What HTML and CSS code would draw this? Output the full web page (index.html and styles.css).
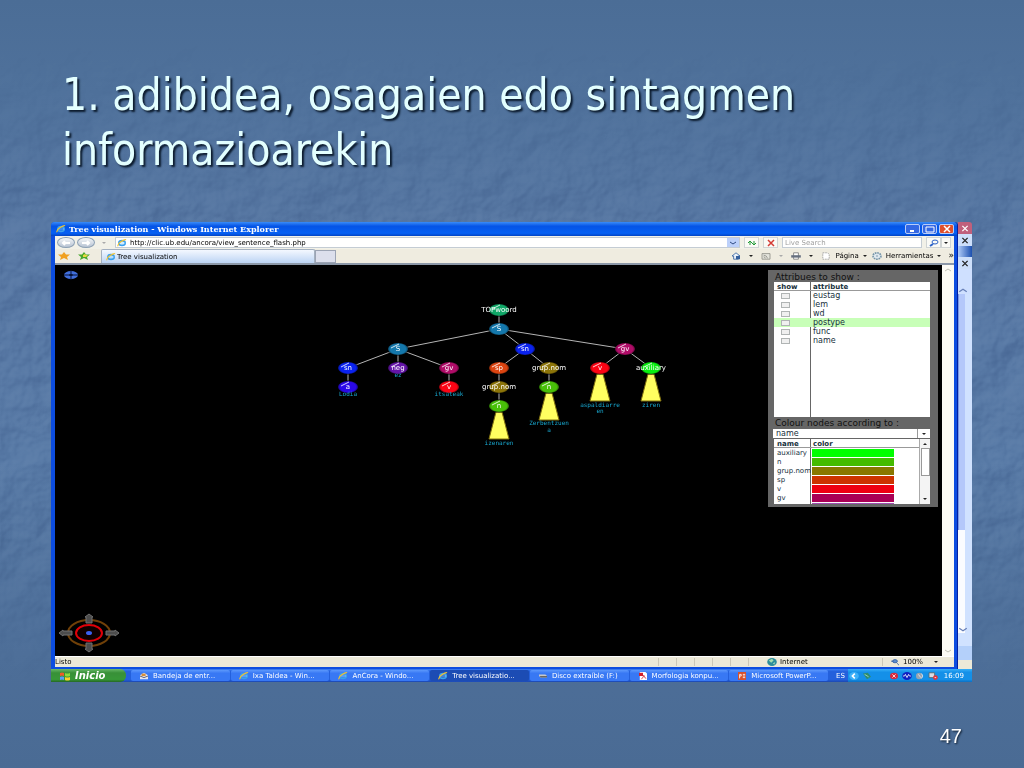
FILE: index.html
```html
<!DOCTYPE html>
<html lang="eu">
<head>
    <meta charset="utf-8">
    <title>1. adibidea</title>
    <link rel="stylesheet" href="styles.css">
</head>
<body>

<!-- shared icons -->
<svg class="defs" width="0" height="0" aria-hidden="true">
    <symbol id="ie" viewBox="0 0 12 10">
        <ellipse cx="6" cy="5" rx="4" ry="3" fill="none" stroke="#3aa0ee" stroke-width="2"/>
        <path d="M3 5h7" stroke="#8fd0ff" stroke-width="1"/>
        <path d="M1 9Q0 6 5 3T11 1" fill="none" stroke="#f2c331" stroke-width="1.5"/>
    </symbol>
    <symbol id="cross" viewBox="0 0 10 8"><path d="M2 1l6 6M8 1L2 7" stroke="currentColor" stroke-width="1.5"/></symbol>
    <symbol id="down" viewBox="0 0 6 4"><path d="M1 1h4L3 3z" fill="currentColor"/></symbol>
    <symbol id="up" viewBox="0 0 6 4"><path d="M1 3h4L3 1z" fill="currentColor"/></symbol>
    <symbol id="chevron" viewBox="0 0 8 4"><path d="M1 1l3 2 3-2" fill="none" stroke="currentColor"/></symbol>
    <symbol id="chevron-up" viewBox="0 0 8 4"><path d="M1 3l3-2 3 2" fill="none" stroke="currentColor"/></symbol>
    <symbol id="star" viewBox="0 0 12 8"><path d="M6 0l2 2.5h4L9 5l1 3-4-2-4 2 1-3-3-2.5h4z" fill="currentColor"/></symbol>
    <symbol id="star-add" viewBox="0 0 12 8"><path d="M6 0l2 2.5h4L9 5l1 3-4-2-4 2 1-3-3-2.5h4z" fill="#48a82c"/><path d="M7 2l1 1h2L8 5H5V3z" fill="#e8d840"/></symbol>
</svg>

<svg class="texture" aria-hidden="true">
    <filter id="paper" x="0" y="0" width="100%" height="100%" color-interpolation-filters="sRGB">
        <feTurbulence type="fractalNoise" baseFrequency="0.025 0.025" numOctaves="4" seed="8"/>
        <feColorMatrix values="0 0 0 0 1  0 0 0 0 1  0 0 0 0 1  1 0 0 0 0"/>
        <feDiffuseLighting surfaceScale="9" diffuseConstant="0.7" lighting-color="#ffffff"><feDistantLight azimuth="225" elevation="45"/></feDiffuseLighting>
    </filter>
    <rect width="100%" height="100%" filter="url(#paper)"/>
</svg>

<main class="slide">
    <h1>1. adibidea, osagaien edo sintagmen informazioarekin</h1>

    <section class="desktop">
        <div class="windows">
            <div class="browser">
                <header class="titlebar">
                    <svg class="icon"><use href="#ie"/></svg>
                    <span class="window-title">Tree visualization - Windows Internet Explorer</span>
                    <button class="win-btn" aria-label="Minimizar"><svg viewBox="0 0 12 8"><path d="M3 6h4" stroke="#fff" stroke-width="2"/></svg></button>
                    <button class="win-btn" aria-label="Restaurar"><svg viewBox="0 0 12 8"><path d="M2 2h8v5H2z" fill="none" stroke="#fff"/></svg></button>
                    <button class="win-btn close" aria-label="Cerrar"><svg><use href="#cross"/></svg></button>
                </header>

                <div class="address-row">
                    <button class="nav-btn" aria-label="Atrás"><svg viewBox="0 0 12 8"><path d="M10 4H3M5 2L3 4l2 2" fill="none" stroke="#fff" stroke-width="2"/></svg></button>
                    <button class="nav-btn" aria-label="Adelante"><svg viewBox="0 0 12 8"><path d="M2 4h7M7 2l2 2-2 2" fill="none" stroke="#fff" stroke-width="2"/></svg></button>
                    <svg class="caret gray"><use href="#down"/></svg>
                    <div class="url-box">
                        <svg class="icon"><use href="#ie"/></svg>
                        <input type="text" aria-label="Dirección" value="http://clic.ub.edu/ancora/view_sentence_flash.php">
                        <button class="drop" aria-label="Historial"><svg class="chevron"><use href="#chevron"/></svg></button>
                    </div>
                    <button class="tool-btn green" aria-label="Actualizar"><svg viewBox="0 0 12 8"><path d="M4 6V2M2 4l2-2 2 2M8 2v4M6 4l2 2 2-2" fill="none" stroke="currentColor"/></svg></button>
                    <button class="tool-btn red" aria-label="Detener"><svg><use href="#cross"/></svg></button>
                    <input class="search" type="text" aria-label="Buscar" placeholder="Live Search">
                    <button class="tool-btn blue" aria-label="Buscar"><svg viewBox="0 0 12 8"><ellipse cx="7" cy="3" rx="3" ry="2" fill="none" stroke="currentColor"/><path d="M5 5L2 7" stroke="currentColor" stroke-width="2"/></svg></button>
                    <button class="tool-btn thin" aria-label="Opciones"><svg class="caret"><use href="#down"/></svg></button>
                </div>

                <div class="tab-row">
                    <svg class="icon gold"><use href="#star"/></svg>
                    <svg class="icon leaf"><use href="#star-add"/></svg>
                    <button class="tab"><svg class="icon"><use href="#ie"/></svg>Tree visualization</button>
                    <button class="new-tab" aria-label="Nueva pestaña"></button>
                    <div class="commands">
                        <svg class="icon" viewBox="0 0 12 10"><path d="M1 5l5-4 5 4H9v4H3V5z" fill="#e8f0fa" stroke="#345f9c"/><path d="M6 5h5v4H6z" fill="#345f9c"/></svg>
                        <svg class="caret"><use href="#down"/></svg>
                        <svg class="icon" viewBox="0 0 12 10"><path d="M1 2h10v7H1z" fill="#e4e4dc" stroke="#8c8c84"/><path d="M3 4q4 0 5 4M3 6q2 0 2 2" fill="none" stroke="#8c8c84"/></svg>
                        <svg class="caret gray"><use href="#down"/></svg>
                        <svg class="icon" viewBox="0 0 12 10"><path d="M3 1h6v8H3z" fill="#fff" stroke="#777"/><path d="M0 4h12v3H0z" fill="#667080"/></svg>
                        <svg class="caret"><use href="#down"/></svg>
                        <button class="command"><svg class="icon" viewBox="0 0 12 10"><path d="M2 1h6l2 2v6H2z" fill="#fff" stroke="#999" stroke-dasharray="2 1"/></svg>Página<svg class="caret"><use href="#down"/></svg></button>
                        <button class="command"><svg class="icon" viewBox="0 0 12 10"><ellipse cx="6" cy="5" rx="5" ry="4" fill="#dfe8ee" stroke="#7695a8" stroke-width="2" stroke-dasharray="2 1"/><circle cx="6" cy="5" r="1" fill="#7695a8"/></svg>Herramientas<svg class="caret"><use href="#down"/></svg></button>
                        <span class="more">»</span>
                    </div>
                </div>

                <div class="viewport">
                    <div class="canvas">
                        <svg class="tree" viewBox="0 0 887 391">
                            <defs>
                                <radialGradient id="shade"><stop offset="0.7" stop-color="#000" stop-opacity="0"/><stop offset="1" stop-color="#000" stop-opacity="0.6"/></radialGradient>
                                <g id="gloss"><ellipse rx="11" ry="7" fill="url(#shade)"/><path d="M-7-1L1-5" stroke="#fff" stroke-opacity="0.8"/></g>
                                <path id="cone" d="M-3 6H3L10 33H-10z"/>
                                <path id="arrow" d="M0-19l4 3H3v6h-6v-6h-1z"/>
                            </defs>

                            <g class="edges">
                                <path d="M444 45V64L343 84M444 64L470 84M444 64L570 84"/>
                                <path d="M343 84L293 103V122M343 84V103M343 84L394 103V122"/>
                                <path d="M470 84L444 103V141M470 84L494 103V122"/>
                                <path d="M570 84L545 103M570 84L596 103"/>
                            </g>

                            <g class="cones">
                                <use href="#cone" x="444" y="141"/>
                                <use href="#cone" x="494" y="122"/>
                                <use href="#cone" x="545" y="103"/>
                                <use href="#cone" x="596" y="103"/>
                            </g>

                            <g class="nodes" id="nodes"></g>

                            <g class="words">
                                <text x="293" y="131">Lodia</text>
                                <text x="343" y="112">ez</text>
                                <text x="394" y="131">itsateak</text>
                                <text x="444" y="180">izenaren</text>
                                <text x="494" y="160">Zerbentzuen</text>
                                <text x="494" y="167">a</text>
                                <text x="545" y="142">aspaldiarre</text>
                                <text x="545" y="148">en</text>
                                <text x="596" y="142">ziren</text>
                            </g>

                            <g transform="translate(16 10)">
                                <ellipse rx="7" ry="4" fill="#416fdc"/>
                                <path d="M-7 0H7M0-5V5" stroke="#061238"/>
                                <ellipse rx="2" ry="1" fill="#061238"/>
                            </g>

                            <g transform="translate(34 368)">
                                <ellipse rx="21" ry="13" fill="none" stroke="#704008" stroke-width="2"/>
                                <ellipse rx="13" ry="8" fill="#100000" stroke="#e00008" stroke-width="2"/>
                                <ellipse rx="3" ry="2" fill="#3a60f0"/>
                                <g class="arrows">
                                    <use href="#arrow"/>
                                    <use href="#arrow" transform="rotate(180)"/>
                                    <path d="M-30 0l4-3v1h9v4h-9v1zM30 0l-4-3v1h-9v4h9v1z"/>
                                </g>
                            </g>
                        </svg>

                        <aside class="panel">
                            <h2>Attribues to show :</h2>
                            <div class="grid-box attributes">
                                <table>
                                    <thead><tr><th>show</th><th>attribute</th></tr></thead>
                                    <tbody>
                                        <tr><td><input type="checkbox" id="a1"></td><td><label for="a1">eustag</label></td></tr>
                                        <tr><td><input type="checkbox" id="a2"></td><td><label for="a2">lem</label></td></tr>
                                        <tr><td><input type="checkbox" id="a3"></td><td><label for="a3">wd</label></td></tr>
                                        <tr class="selected"><td><input type="checkbox" id="a4"></td><td><label for="a4">postype</label></td></tr>
                                        <tr><td><input type="checkbox" id="a5"></td><td><label for="a5">func</label></td></tr>
                                        <tr><td><input type="checkbox" id="a6"></td><td><label for="a6">name</label></td></tr>
                                    </tbody>
                                </table>
                            </div>
                            <h2 class="colour-title"><label for="colour-by">Colour nodes according to :</label></h2>
                            <div class="select-box">
                                <select id="colour-by"><option>name</option></select>
                                <svg class="caret"><use href="#down"/></svg>
                            </div>
                            <div class="grid-box colours">
                                <table>
                                    <thead><tr><th>name</th><th>color</th></tr></thead>
                                    <tbody>
                                        <tr><td>auxiliary</td><td><div class="swatch auxiliary"></div></td></tr>
                                        <tr><td>n</td><td><div class="swatch n"></div></td></tr>
                                        <tr><td>grup.nom</td><td><div class="swatch grup"></div></td></tr>
                                        <tr><td>sp</td><td><div class="swatch sp"></div></td></tr>
                                        <tr><td>v</td><td><div class="swatch v"></div></td></tr>
                                        <tr><td>gv</td><td><div class="swatch gv"></div></td></tr>
                                        <tr><td></td><td><div class="swatch neg"></div></td></tr>
                                    </tbody>
                                </table>
                                <div class="mini-scroll">
                                    <svg class="caret"><use href="#up"/></svg>
                                    <div class="thumb"></div>
                                    <svg class="caret"><use href="#down"/></svg>
                                </div>
                            </div>
                        </aside>
                    </div>
                    <div class="page-scroll">
                        <svg class="chevron"><use href="#chevron-up"/></svg>
                        <svg class="chevron"><use href="#chevron"/></svg>
                    </div>
                </div>

                <footer class="status">
                    <span class="ready">Listo</span>
                    <div class="cells"><i></i><i></i><i></i><i></i><i></i><i></i></div>
                    <span class="zone"><svg class="icon" viewBox="0 0 12 10"><ellipse cx="6" cy="5" rx="6" ry="5" fill="#2c8e9c"/><path d="M2 3l4-2 2 2-3 3zM7 7l3-2-1 3z" fill="#a6dcb0"/></svg>Internet</span>
                    <span class="zoom"><svg class="icon" viewBox="0 0 12 10"><ellipse cx="6" cy="4" rx="3" ry="2" fill="#5c8cd0" stroke="#2d5c9c"/><path d="M8 6l3 3M1 4h3" stroke="#2d5c9c"/></svg>100%<svg class="caret"><use href="#down"/></svg></span>
                </footer>
            </div>

            <!-- window that sticks out behind the browser -->
            <div class="behind">
                <div class="behind-title"><svg><use href="#cross"/></svg></div>
                <div class="behind-menu"><svg><use href="#cross"/></svg></div>
                <div class="behind-blue"></div>
                <div class="behind-menu"><svg><use href="#cross"/></svg></div>
                <div class="behind-top"><svg><use href="#chevron-up"/></svg></div>
                <div class="behind-body"></div>
                <div class="behind-pad"><svg><use href="#chevron"/></svg></div>
                <div class="behind-status"></div>
            </div>
        </div>

        <nav class="taskbar">
            <button class="start"><svg class="flag" viewBox="0 0 12 10"><path d="M1 2q2-1 4 0v3q-2-1-4 0z" fill="#f05a28"/><path d="M6 2q2 1 5 0v3q-3 1-5 0z" fill="#8cdc3c"/><path d="M1 6q2-1 4 0v3q-2-1-4 0z" fill="#5a9cf8"/><path d="M6 6q2 1 5 0v3q-3 1-5 0z" fill="#fcd02c"/></svg>Inicio</button>
            <div class="tasks">
                <button class="task"><svg class="icon" viewBox="0 0 12 10"><path d="M1 4l5-3 5 3v5H1z" fill="#e6e6f0"/><path d="M3 2h5v3H3z" fill="#d89038"/><path d="M1 5l5 2 5-2" fill="none" stroke="#445"/></svg>Bandeja de entr...</button>
                <button class="task"><svg class="icon"><use href="#ie"/></svg>Ixa Taldea - Win...</button>
                <button class="task"><svg class="icon"><use href="#ie"/></svg>AnCora - Windo...</button>
                <button class="task active"><svg class="icon"><use href="#ie"/></svg>Tree visualizatio...</button>
                <button class="task"><svg class="icon" viewBox="0 0 12 10"><path d="M1 3h8l2 2v2H3L1 5z" fill="#c8c8c8"/><path d="M2 5h9v2H3z" fill="#666"/></svg>Disco extraíble (F:)</button>
                <button class="task"><svg class="icon" viewBox="0 0 12 10"><path d="M2 0h7l2 2v8H2z" fill="#fff"/><path d="M1 1h5v4H1z" fill="#d4202c"/><path d="M4 9q3-3 3-5 1 4 3 4" fill="none" stroke="#d4202c"/></svg>Morfologia konpu...</button>
                <button class="task"><svg class="icon" viewBox="0 0 12 10"><path d="M1 0h10v10H1z" fill="#d8502c"/><path d="M3 8V3h2v2H3M7 3h3M7 5h3M7 7h3" fill="none" stroke="#fff"/></svg>Microsoft PowerP...</button>
            </div>
            <span class="lang">ES</span>
            <div class="tray">
                <svg class="icon" viewBox="0 0 12 10"><ellipse cx="6" cy="5" rx="6" ry="5" fill="#3cb0f8"/><path d="M7 2L4 5l3 3" fill="none" stroke="#fff" stroke-width="2"/></svg>
                <svg class="icon" viewBox="0 0 12 10"><path d="M1 2l6-1 4 5-5 3z" fill="#2c8c70"/><path d="M3 3l5 3" stroke="#b8e0c0"/></svg>
                <span class="gap"></span>
                <svg class="icon" viewBox="0 0 12 10"><ellipse cx="6" cy="5" rx="5" ry="4" fill="#d8283c"/><path d="M4 3l4 4M8 3L4 7" stroke="#fff"/></svg>
                <svg class="icon" viewBox="0 0 12 10"><ellipse cx="6" cy="5" rx="6" ry="5" fill="#1020c0"/><path d="M1 5h2l1-2 2 4 2-4 1 2h2" fill="none" stroke="#fff"/></svg>
                <svg class="icon" viewBox="0 0 12 10"><ellipse cx="5" cy="5" rx="4" ry="4" fill="#98a4b0"/><path d="M4 3l3 4M8 2q3 3 0 6" fill="none" stroke="#e8eef4"/></svg>
                <svg class="icon" viewBox="0 0 12 10"><path d="M1 1h7v6H1z" fill="#d8dce4" stroke="#566"/><ellipse cx="9" cy="7" rx="3" ry="3" fill="#e0343c"/><path d="M8 7h2" stroke="#fff"/></svg>
                <time>16:09</time>
            </div>
        </nav>
    </section>

    <p class="page-number">47</p>
</main>

<script>
    // x, y, label, colour
    const nodes = [
        [444, 45, 'TOPwoord', '#10a868'],
        [444, 64, 'S', '#1478ac'],
        [343, 84, 'S', '#1478ac'],
        [470, 84, 'sn', '#0a22f0'],
        [570, 84, 'gv', '#b00c68'],
        [293, 103, 'sn', '#0a22f0'],
        [343, 103, 'neg', '#6414a8'],
        [394, 103, 'gv', '#b00c68'],
        [444, 103, 'sp', '#dc4410'],
        [494, 103, 'grup.nom', '#8c7408'],
        [545, 103, 'v', '#fc0414'],
        [596, 103, 'auxiliary', '#08f010'],
        [293, 122, 'a', '#2a08e8'],
        [394, 122, 'v', '#fc0414'],
        [444, 122, 'grup.nom', '#8c7408'],
        [494, 122, 'n', '#48c008'],
        [444, 141, 'n', '#48c008']
    ];

    document.getElementById('nodes').innerHTML = nodes.map(([x, y, label, colour]) =>
        `<g transform="translate(${x} ${y})">
            <ellipse rx="10" ry="6" fill="${colour}"/>
            <use href="#gloss"/>
            <text y="2">${label}</text>
        </g>`
    ).join('');
</script>
</body>
</html>
```

FILE: styles.css
```css
* {
    box-sizing: border-box;
}

body {
    margin: 0;
    min-height: 100vh;
    position: relative;
    font-family: "DejaVu Sans", Verdana, sans-serif;
    font-size: 7px;
    background: linear-gradient(#4b6d96 0%, #4f719b 12%, #5878a4 32%, #587aa6 60%, #4d6e98 85%, #4a6b94 100%);
}

button, input, select {
    font: inherit;
    color: inherit;
    margin: 0;
    padding: 0;
    border: 0;
    background: none;
    outline: none;
}

svg {
    flex: none;
}

.defs {
    position: absolute;
}

.texture {
    position: absolute;
    width: 100%;
    height: 100%;
    mix-blend-mode: soft-light;
    opacity: 0.25;
    -webkit-mask-image: linear-gradient(transparent 5%, #000 30%, #000 70%, transparent 90%);
    mask-image: linear-gradient(transparent 5%, #000 30%, #000 70%, transparent 90%);
}

.slide {
    position: relative;
    padding: 67px 52px 0 51px;
}

h1 {
    margin: 0 100px 45px 11px;
    font-family: "DejaVu Sans Condensed", Tahoma, sans-serif;
    font-size: 44px;
    line-height: 55px;
    font-weight: normal;
    color: #e3ffff;
    text-shadow: 2px 2px 2px #0b1a2c;
}

.page-number {
    margin: 42px 10px 0 0;
    font-family: "Liberation Sans", Arial, sans-serif;
    font-size: 20px;
    line-height: 24px;
    text-align: right;
    color: #fff;
    text-shadow: 1px 1px 2px #0b1a2c;
}

.icon {
    width: 12px;
    height: 8px;
}

.caret {
    width: 6px;
    height: 4px;
    color: #222;
}

.caret.gray {
    color: #aaa;
}

.chevron {
    width: 8px;
    height: 4px;
    color: #304c84;
}

.windows {
    display: flex;
}

/* browser window */
.browser {
    flex: 1;
    min-width: 0;
    padding: 0 3px 2px 4px;
    background: #0c4de0;
    border-right: 1px solid #0420a0;
    border-radius: 4px 4px 0 0;
}

.titlebar {
    display: flex;
    align-items: center;
    gap: 2px;
    height: 14px;
    margin: 0 -3px 0 -4px;
    padding: 0 3px 0 4px;
    border-radius: 4px 4px 0 0;
    background: linear-gradient(#3a8cf8, #0554e6 30%, #0560f4 80%, #0344c4);
    color: #fff;
}

.window-title {
    flex: 1;
    font-family: "DejaVu Serif", serif;
    font-size: 8px;
    font-weight: bold;
}

.win-btn {
    display: flex;
    align-items: center;
    justify-content: center;
    width: 15px;
    height: 10px;
    border: 1px solid #b8ccf8;
    border-radius: 2px;
    background: #3468e4;
    color: #fff;
}

.win-btn svg {
    width: 12px;
    height: 8px;
}

.win-btn.close {
    background: #e0502c;
}

.address-row {
    display: flex;
    align-items: center;
    gap: 4px;
    height: 13px;
    padding: 0 3px 0 2px;
    background: #f2f1e8;
}

.nav-btn {
    display: flex;
    align-items: center;
    justify-content: center;
    width: 18px;
    height: 11px;
    margin-right: -2px;
    border: 1px solid #8ca0b4;
    border-radius: 50%;
    background: linear-gradient(#f4f6f8, #b8c4d4);
}

.nav-btn svg {
    width: 12px;
    height: 8px;
}

.address-row > .caret {
    margin: 0 4px;
}

.url-box {
    display: flex;
    flex: 1;
    align-items: center;
    height: 11px;
    border: 1px solid #c4ccd4;
    background: #fff;
}

.url-box input {
    flex: 1;
    min-width: 0;
    height: 9px;
    padding-left: 2px;
}

.drop {
    display: flex;
    align-items: center;
    justify-content: center;
    width: 12px;
    height: 9px;
    background: #bcd0fa;
}

.tool-btn {
    display: flex;
    align-items: center;
    justify-content: center;
    width: 15px;
    height: 11px;
    border: 1px solid #d0d4d4;
    background: #fafaf6;
}

.tool-btn svg {
    width: 12px;
    height: 8px;
}

.tool-btn.thin {
    width: 10px;
    margin-left: -4px;
}

.tool-btn .caret {
    width: 6px;
    height: 4px;
}

.green { color: #1f9a35; }
.red { color: #d43b35; }
.blue { color: #2c62c8; }

.search {
    width: 140px;
    height: 11px;
    padding-left: 2px;
    border: 1px solid #c4ccd4;
    background: #fff;
}

.search::placeholder {
    color: #a0a0a0;
    opacity: 1;
}

.tab-row {
    display: flex;
    align-items: center;
    height: 16px;
    padding-left: 3px;
    border-bottom: 2px solid #8c98a8;
    background: #efece0;
}

.gold {
    color: #f0a020;
    margin-right: 8px;
}

.leaf {
    margin-right: 11px;
}

.tab {
    display: flex;
    align-items: center;
    width: 214px;
    height: 14px;
    padding-left: 3px;
    border: 1px solid #a4b0c0;
    border-bottom: 0;
    border-radius: 2px 2px 0 0;
    background: linear-gradient(#f4f8ff, #bcd4f4);
}

.new-tab {
    width: 21px;
    height: 13px;
    border: 1px solid #9ca4b4;
    background: #dcdfec;
}

.commands {
    display: flex;
    align-items: center;
    gap: 6px;
    margin-left: auto;
}

.command {
    display: flex;
    align-items: center;
    gap: 3px;
}

.command + .command {
    margin-left: -3px;
}

.more {
    align-self: flex-start;
    font-size: 9px;
    line-height: 6px;
}

/* page */
.viewport {
    display: flex;
}

.canvas {
    flex: 1;
    min-width: 0;
    position: relative;
    background: #000;
}

.tree {
    display: block;
    width: 100%;
    height: auto;
}

.edges path {
    fill: none;
    stroke: #b4b4b4;
}

.cones {
    fill: #ffff60;
    stroke: #807010;
}

.nodes text {
    fill: #fff;
    font-size: 7px;
    text-anchor: middle;
}

.words text {
    fill: #18a8d0;
    font-family: "DejaVu Sans Mono", monospace;
    font-size: 6px;
    text-anchor: middle;
}

.arrows {
    fill: #4c4c4c;
    stroke: #707070;
}

.panel {
    position: absolute;
    top: 5px;
    right: 4px;
    width: 170px;
    padding: 2px 8px 3px 6px;
    background: #666;
    color: #16303c;
    font-size: 8px;
}

.panel h2 {
    margin: 0;
    padding-left: 1px;
    font-size: 9px;
    line-height: 10px;
    font-weight: normal;
    color: #111;
    white-space: nowrap;
}

.panel .colour-title {
    padding-top: 1px;
}

.grid-box {
    display: flex;
    overflow: hidden;
    background: linear-gradient(#666, #666) 36px 0 / 1px 100% no-repeat #fff;
}

.grid-box table {
    flex: 1;
    align-self: flex-start;
    table-layout: fixed;
    border-collapse: collapse;
    width: 100%;
}

.grid-box tr {
    height: 9px;
}

.grid-box th, .grid-box td {
    height: 9px;
    padding: 0 0 0 3px;
    line-height: 8px;
    text-align: left;
    white-space: nowrap;
}

.grid-box th:first-child {
    width: 36px;
}

.grid-box th {
    font-size: 7px;
    box-shadow: inset 0 -1px #999;
}

.attributes {
    height: 135px;
}

.colours {
    height: 65px;
    font-size: 7px;
}

.colours td + td {
    padding-left: 2px;
}

.selected {
    background: #c8ffb8;
}

.attributes input {
    appearance: none;
    display: block;
    width: 9px;
    height: 6px;
    margin-left: 4px;
    border: 1px solid #b0b4b4;
    background: #f0f0f0;
}

.select-box {
    display: flex;
    align-items: center;
    height: 9px;
    margin: 1px 0 1px -1px;
    padding-right: 3px;
    background: #fff;
}

.select-box select {
    appearance: none;
    flex: 1;
    height: 9px;
    margin-right: 3px;
    padding-left: 3px;
    border-right: 1px solid #999;
    line-height: 9px;
}

.swatch {
    width: 82px;
    height: 8px;
}

.auxiliary { background: #00ff00; }
.n { background: #44bb00; }
.grup { background: #887700; }
.sp { background: #cc3300; }
.v { background: #ee0011; }
.gv { background: #aa0055; }
.neg { background: #a050b0; }

.mini-scroll {
    display: flex;
    flex-direction: column;
    align-items: center;
    width: 11px;
    padding: 3px 0;
    border-left: 1px solid #aaa;
    background: #f4f4f4;
}

.thumb {
    width: 9px;
    height: 28px;
    margin: 2px 0 auto;
    border: 1px solid #999;
    background: #fff;
}

.page-scroll {
    display: flex;
    flex-direction: column;
    align-items: center;
    justify-content: space-between;
    width: 12px;
    padding: 3px 0;
    background: #fcfbf4;
}

.page-scroll .chevron {
    color: #c0c0b4;
}

.status {
    display: flex;
    align-items: center;
    height: 11px;
    border-top: 1px solid #fff;
    background: #ece9d8;
}

.cells {
    display: flex;
    margin-left: auto;
}

.cells i {
    width: 18px;
    height: 8px;
    border-left: 1px solid #ccc8b8;
}

.zone, .zoom {
    display: flex;
    align-items: center;
    gap: 2px;
}

.zone {
    width: 116px;
}

.zoom {
    width: 72px;
    padding-left: 6px;
    border-left: 1px solid #ccc8b8;
}

.zoom .caret {
    margin-left: 8px;
}

.behind {
    display: flex;
    flex-direction: column;
    width: 14px;
}

.behind svg {
    width: 10px;
    height: 7px;
}

.behind-title, .behind-menu {
    display: flex;
    align-items: center;
    justify-content: center;
    height: 12px;
    background: #cddffa;
    color: #222;
}

.behind-title {
    border-radius: 0 3px 0 0;
    background: #c0607c;
    color: #fff;
}

.behind-blue {
    height: 11px;
    background: linear-gradient(90deg, #b0ccf8, #1c50b0);
}

.behind-top {
    display: flex;
    align-items: flex-end;
    height: 25px;
    background: #cfe0ff;
    color: #6880b8;
}

.behind-body {
    flex: 1;
    border-right: 7px solid #d0e2ff;
    border-left: 1px solid #7898e8;
    background: #b4c8fa;
}

.behind-pad {
    display: flex;
    align-items: flex-end;
    height: 103px;
    border-right: 7px solid #d0e2ff;
    background: #fafcff;
    color: #6880b8;
}

.behind-status {
    height: 36px;
    background: linear-gradient(#d0e2ff 36%, #b4d0fa 36%, #b4d0fa 75%, #ece9d8 75%);
}

/* taskbar */
.taskbar {
    display: flex;
    align-items: center;
    height: 13px;
    background: linear-gradient(#3c80f4, #2460dc 20%, #2460dc 80%, #1c48b0);
    color: #fff;
}

.start {
    display: flex;
    align-items: center;
    gap: 3px;
    width: 75px;
    height: 13px;
    padding-left: 7px;
    border-radius: 0 6px 6px 0;
    background: linear-gradient(#68b868, #389038 30%, #389838 80%, #246824);
    font-size: 10px;
    font-weight: bold;
    font-style: italic;
}

.flag {
    width: 14px;
    height: 10px;
}

.tasks {
    display: flex;
    flex: 1;
    gap: 1px;
    margin-left: 5px;
}

.task {
    display: flex;
    flex: 1;
    align-items: center;
    gap: 3px;
    min-width: 0;
    height: 11px;
    padding-left: 7px;
    border-radius: 2px;
    background: linear-gradient(#5c98fc, #3878f4 30%, #3878f4);
    white-space: nowrap;
}

.task.active {
    background: #1c4cb4;
}

.lang {
    width: 12px;
    margin-left: 8px;
}

.tray {
    display: flex;
    align-items: center;
    gap: 1px;
    width: 124px;
    height: 13px;
    padding-right: 8px;
    background: linear-gradient(#38b0f8, #1490e8 25%, #1490e8 80%, #0c70c4);
}

.gap {
    flex: 1;
}

.tray time {
    margin-left: 4px;
}
```
